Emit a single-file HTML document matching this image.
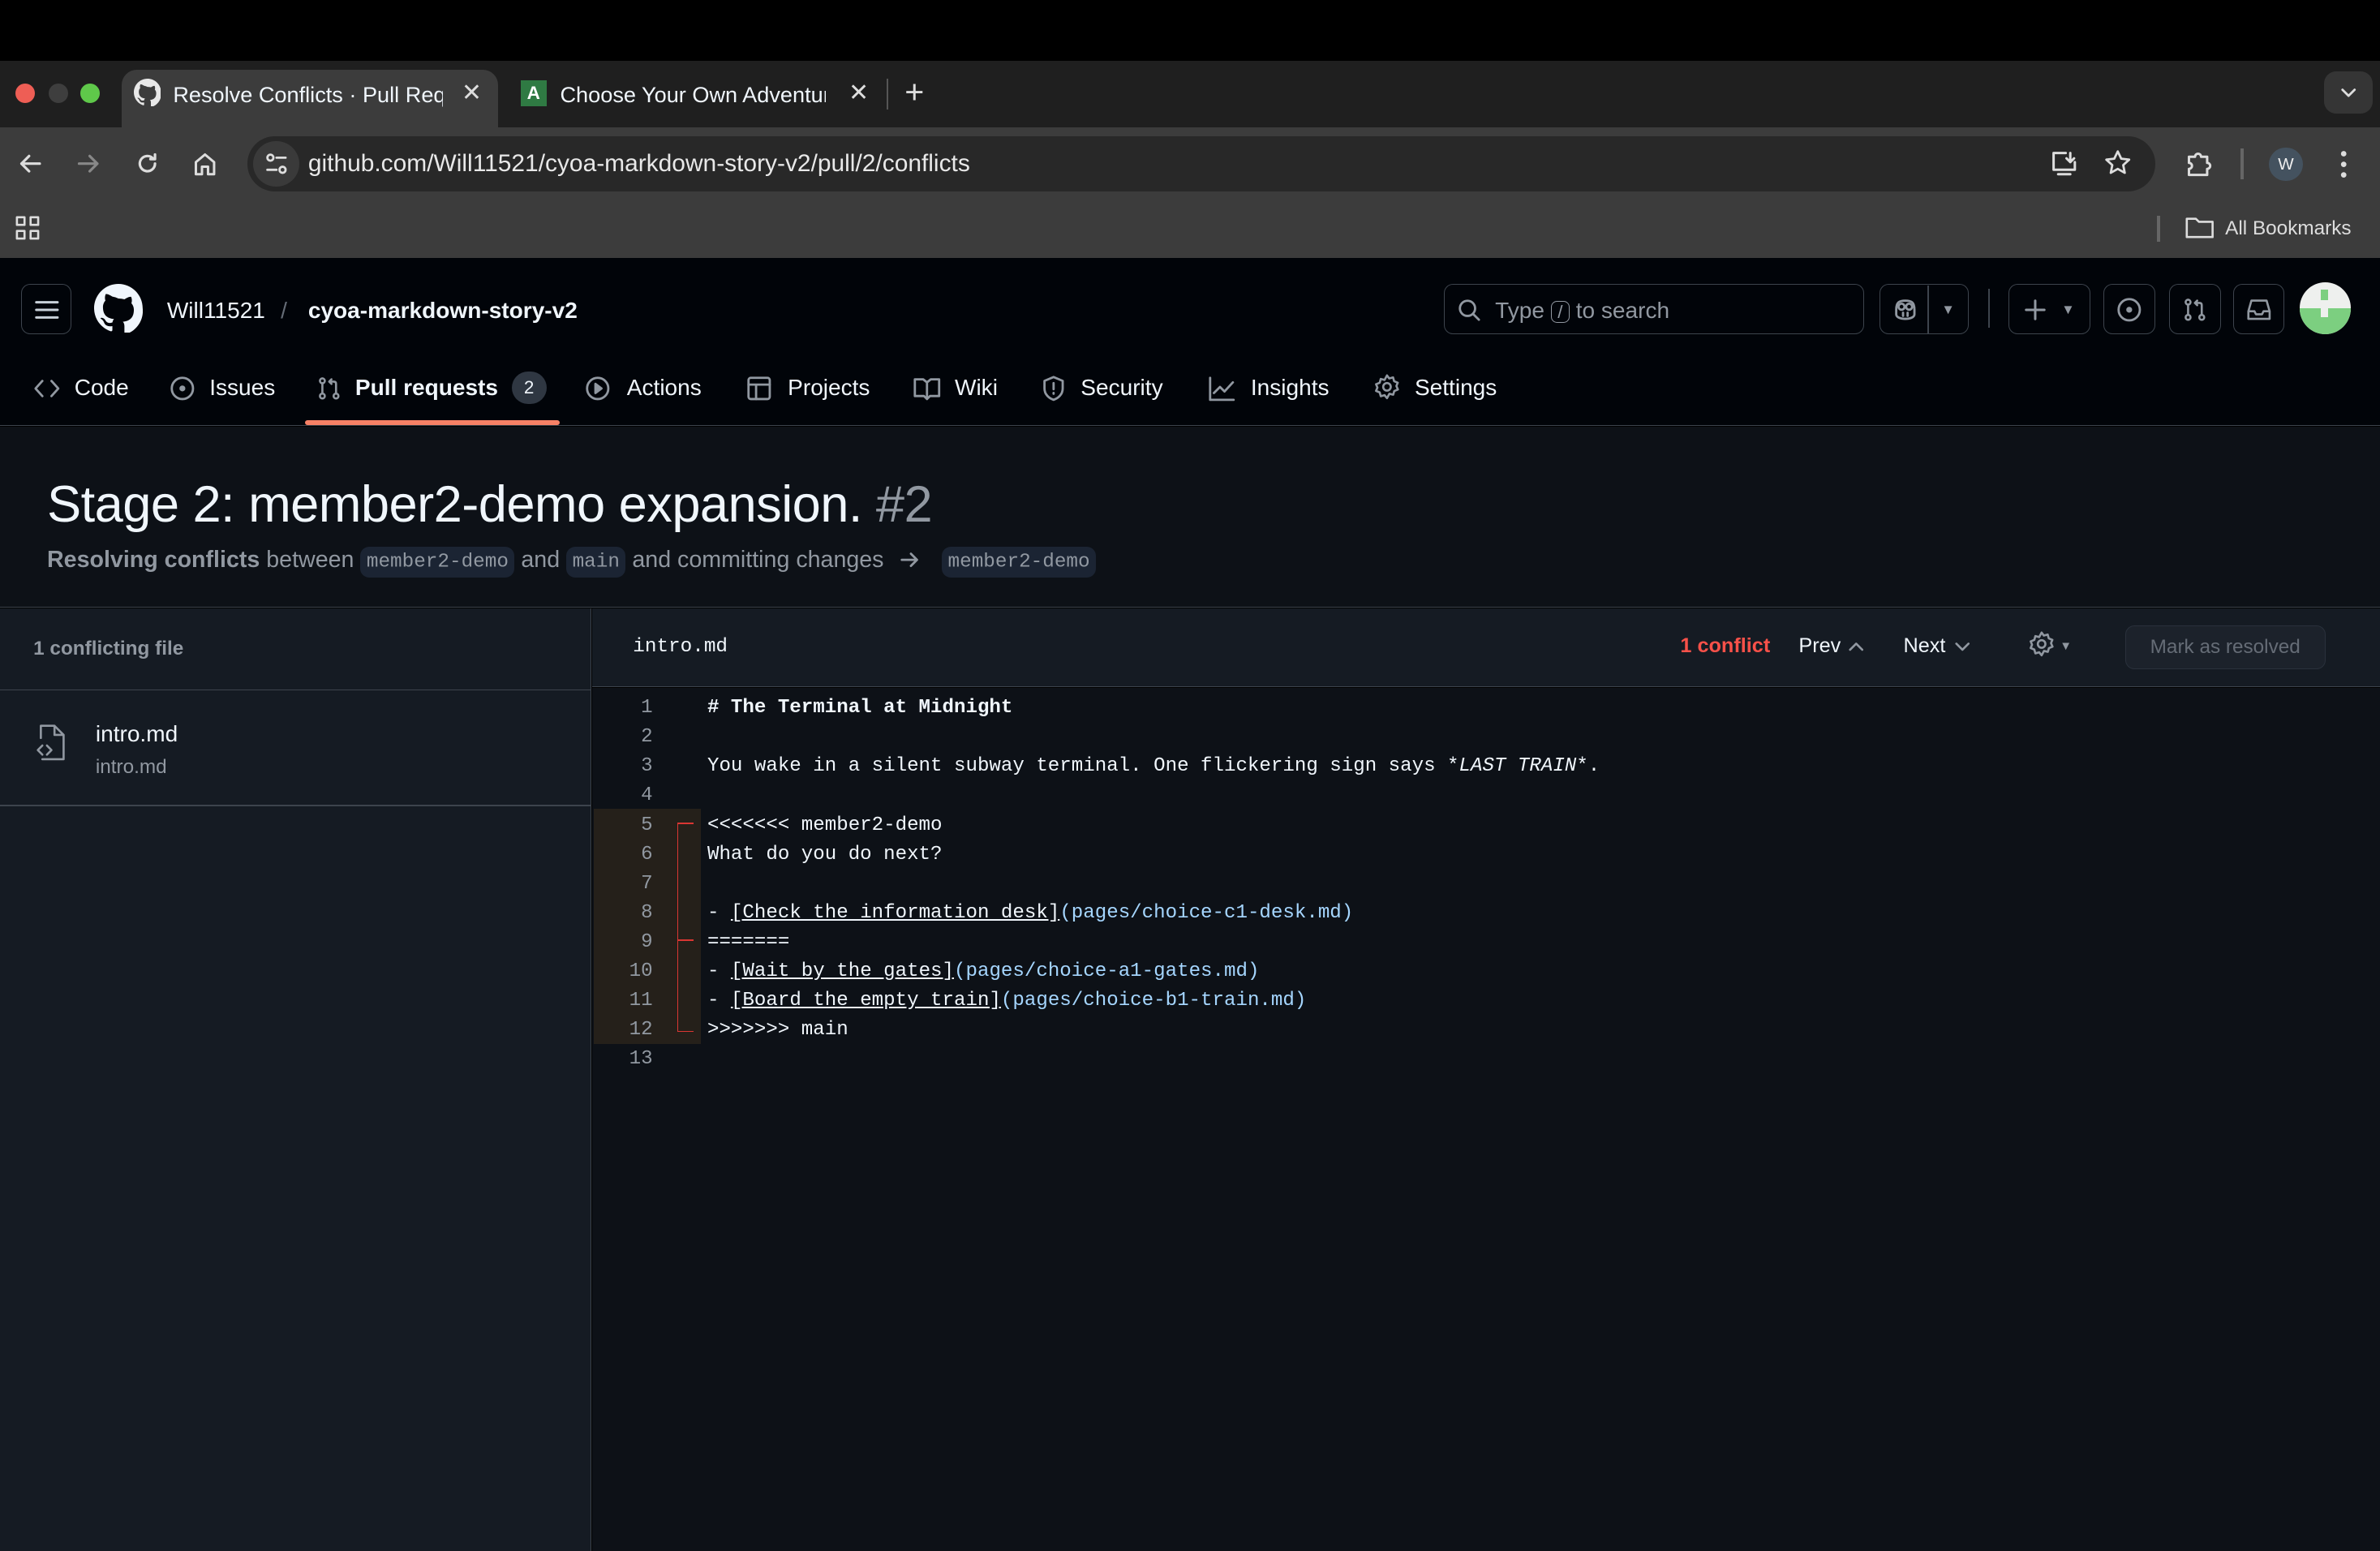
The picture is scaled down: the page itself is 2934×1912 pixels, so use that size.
<!DOCTYPE html>
<html><head><meta charset="utf-8"><style>
html,body{margin:0;padding:0;background:#000;overflow:hidden}
body{width:2934px;height:1912px}
#w{position:relative;width:1568px;height:1022px;zoom:1.8712;font-family:"Liberation Sans",sans-serif;color:#f0f6fc;overflow:hidden}
.a{position:absolute}
svg{position:absolute;fill:none;stroke-linecap:round;stroke-linejoin:round}
.mono{font-family:"Liberation Mono",monospace}
.btn{position:absolute;border:1px solid #3d444d;border-radius:6px;height:32px;top:187px}
.tab{font-size:14.5px;color:#f0f6fc}
.nav{position:absolute;top:247px;font-size:15px;color:#f0f6fc}
.code{position:absolute;left:466px;font-size:12.9px;color:#f0f6fc;white-space:pre;line-height:19.3px}
.ln{position:absolute;left:400px;width:30px;text-align:right;font-size:12.9px;color:#9198a1;line-height:19.3px}
.pill{background:#1b2433;border-radius:6px;padding:3px 4px;font-family:"Liberation Mono",monospace;font-size:13px;color:#9198a1}
.lk{color:#f0f6fc;text-decoration:underline}
.bl{color:#a5d6ff}
</style></head><body><div id="w">
<div class="a" style="left:0;top:0;width:1568px;height:40px;background:#000"></div>
<div class="a" style="left:0;top:40px;width:1568px;height:44px;background:#1f1f1f"></div>
<div class="a" style="left:10px;top:55px;width:13px;height:13px;border-radius:50%;background:#ee5e55"></div>
<div class="a" style="left:32px;top:55px;width:13px;height:13px;border-radius:50%;background:#3e3e3e"></div>
<div class="a" style="left:53px;top:55px;width:13px;height:13px;border-radius:50%;background:#5fc84a"></div>
<div class="a" style="left:80px;top:46px;width:248px;height:40px;background:#3c3c3c;border-radius:10px 10px 0 0"></div>
<svg style="left:88px;top:52px" width="18" height="18" viewBox="0 0 16 16"><path d="M8 0C3.58 0 0 3.58 0 8c0 3.54 2.29 6.53 5.47 7.59.4.07.55-.17.55-.38v-1.33c-2.230.48-2.7-1.07-2.7-1.07-.36-.93-.89-1.170-.89-1.17-.73-.5.06-.49.06-.49.8.06 1.230.83 1.23.83.72 1.23 1.88.87 2.34.67.07-.52.28-.87.51-1.07-1.78-.2-3.65-.89-3.65-3.95 0-.87.31-1.59.82-2.15-.08-.2-.36-1.02.08-2.12 0 0 .67-.21 2.2.82A7.6 7.6 0 0 1 8 4.8c.68 0 1.36.09 2 .27 1.53-1.04 2.2-.82 2.2-.82.44 1.1.16 1.92.08 2.12.51.56.82 1.27.82 2.15 0 3.07-1.87 3.75-3.65 3.95.29.25.54.73.54 1.48v2.2c0 .21.15.46.55.38A8.01 8.01 0 0 0 16 8c0-4.42-3.58-8-8-8z" fill="#e8e8e8" stroke="none"/></svg>
<div class="a tab" style="left:114px;top:54px;width:178px;overflow:hidden;white-space:nowrap">Resolve Conflicts · Pull Reque</div>
<div class="a" style="left:304px;top:52px;font-size:16px;color:#ddd">✕</div>
<div class="a" style="left:343px;top:53px;width:17px;height:17px;background:#2f7a43;color:#fff;font-size:12px;font-weight:bold;text-align:center;line-height:17px">A</div>
<div class="a tab" style="left:369px;top:54px;width:175px;overflow:hidden;white-space:nowrap">Choose Your Own Adventure</div>
<div class="a" style="left:559px;top:52px;font-size:16px;color:#ddd">✕</div>
<div class="a" style="left:584px;top:52px;width:1px;height:20px;background:#555"></div>
<div class="a" style="left:596px;top:48px;font-size:22px;color:#ddd">+</div>
<div class="a" style="left:1531px;top:47px;width:32px;height:28px;border-radius:8px;background:#353535"></div>
<svg style="left:1541px;top:56px" width="12" height="10" viewBox="0 0 12 10" stroke="#ddd" stroke-width="1.5"><path d="M2 3l4 4 4-4"/></svg>
<div class="a" style="left:0;top:84px;width:1568px;height:86px;background:#3c3c3c"></div>
<svg style="left:10px;top:98px" width="20" height="20" viewBox="0 0 20 20" stroke="#ddd" stroke-width="1.7"><path d="M16 10H4M9 5l-5 5 5 5"/></svg>
<svg style="left:48px;top:98px" width="20" height="20" viewBox="0 0 20 20" stroke="#888" stroke-width="1.7"><path d="M4 10h12M11 5l5 5-5 5"/></svg>
<svg style="left:87px;top:98px" width="20" height="20" viewBox="0 0 20 20" stroke="#ddd" stroke-width="1.7"><path d="M15 10a5 5 0 1 1-1.5-3.6M15 4v3h-3"/></svg>
<svg style="left:125px;top:98px" width="20" height="20" viewBox="0 0 20 20" stroke="#ddd" stroke-width="1.6"><path d="M4 9l6-5 6 5v8h-4v-5H8v5H4z"/></svg>
<div class="a" style="left:163px;top:90px;width:1257px;height:36px;border-radius:18px;background:#282828"></div>
<div class="a" style="left:167px;top:93px;width:30px;height:30px;border-radius:15px;background:#3a3a3a"></div>
<svg style="left:173px;top:99px" width="18" height="18" viewBox="0 0 18 18" stroke="#ddd" stroke-width="1.5"><circle cx="5" cy="5" r="2"/><path d="M9 5h6M3 13h6"/><circle cx="13" cy="13" r="2"/></svg>
<div class="a" style="left:203px;top:99px;font-size:16px;color:#e8e8e8">github.com/Will11521/cyoa-markdown-story-v2/pull/2/conflicts</div>
<svg style="left:1350px;top:98px" width="20" height="20" viewBox="0 0 20 20" stroke="#ddd" stroke-width="1.6"><path d="M11 3H3v11h14V9M6 17h8M14 3v6M11.5 6.5L14 9l2.5-2.5"/></svg>
<svg style="left:1385px;top:97px" width="20" height="20" viewBox="0 0 20 20" stroke="#ddd" stroke-width="1.5"><path d="M10 2.5l2.3 4.8 5.2.6-3.9 3.6 1 5.1-4.6-2.6-4.6 2.6 1-5.1L2.5 7.9l5.2-.6z"/></svg>
<svg style="left:1438px;top:97px" width="22" height="22" viewBox="0 0 22 22" stroke="#ddd" stroke-width="1.6"><path d="M4 6h4a2 2 0 1 1 4 0h4v4a2 2 0 1 1 0 4v4H4v-4a2 2 0 1 0 0-4z"/></svg>
<div class="a" style="left:1476px;top:98px;width:2px;height:20px;background:#666"></div>
<div class="a" style="left:1495px;top:97px;width:22px;height:22px;border-radius:50%;background:#44525f;color:#eee;font-size:11px;text-align:center;line-height:22px">W</div>
<svg style="left:1538px;top:97px" width="12" height="22" viewBox="0 0 12 22" fill="#ddd" stroke="none"><circle cx="6" cy="4" r="1.8" fill="#ddd"/><circle cx="6" cy="11" r="1.8" fill="#ddd"/><circle cx="6" cy="18" r="1.8" fill="#ddd"/></svg>
<svg style="left:10px;top:142px" width="16" height="16" viewBox="0 0 16 16" stroke="#ddd" stroke-width="1.4"><rect x="1" y="1" width="5" height="5"/><rect x="10" y="1" width="5" height="5"/><rect x="1" y="10" width="5" height="5"/><rect x="10" y="10" width="5" height="5"/></svg>
<div class="a" style="left:1421px;top:142px;width:2px;height:17px;background:#666"></div>
<svg style="left:1439px;top:142px" width="20" height="16" viewBox="0 0 20 16" stroke="#ddd" stroke-width="1.4"><path d="M1.5 2h6l2 2h9v10h-17z"/></svg>
<div class="a" style="left:1466px;top:143px;font-size:13px;color:#ddd">All Bookmarks</div>
<div class="a" style="left:0;top:170px;width:1568px;height:110px;background:#010409;border-bottom:1px solid #3d444d"></div>
<div class="btn" style="left:14px;width:32px"></div>
<svg style="left:22px;top:196px" width="18" height="16" viewBox="0 0 18 16" stroke="#c9d1d9" stroke-width="1.6"><path d="M2 3h14M2 8h14M2 13h14"/></svg>
<svg style="left:62px;top:187px" width="32" height="32" viewBox="0 0 16 16"><path d="M8 0C3.58 0 0 3.58 0 8c0 3.54 2.29 6.53 5.47 7.59.4.07.55-.17.55-.38v-1.33c-2.23.48-2.7-1.07-2.7-1.07-.36-.93-.89-1.17-.89-1.17-.73-.5.06-.49.06-.49.8.06 1.23.83 1.23.83.72 1.23 1.88.87 2.34.67.07-.52.28-.87.51-1.07-1.78-.2-3.65-.89-3.65-3.95 0-.87.31-1.59.82-2.15-.08-.2-.36-1.02.08-2.12 0 0 .67-.21 2.2.82A7.6 7.6 0 0 1 8 4.8c.68 0 1.36.09 2 .27 1.53-1.04 2.2-.82 2.2-.82.44 1.1.16 1.92.08 2.12.51.56.82 1.27.82 2.15 0 3.07-1.87 3.75-3.65 3.95.29.25.54.73.54 1.48v2.2c0 .21.15.46.55.38A8.01 8.01 0 0 0 16 8c0-4.42-3.58-8-8-8z" fill="#f0f6fc" stroke="none"/></svg>
<div class="a" style="left:110px;top:196px;font-size:15px;color:#f0f6fc">Will11521</div>
<div class="a" style="left:185px;top:196px;font-size:15px;color:#656c76">/</div>
<div class="a" style="left:203px;top:196px;font-size:15px;font-weight:bold;color:#f0f6fc">cyoa-markdown-story-v2</div>
<div class="btn" style="left:951px;width:276px"></div>
<svg style="left:960px;top:196px" width="16" height="16" viewBox="0 0 16 16" stroke="#9198a1" stroke-width="1.5"><circle cx="7" cy="7" r="5"/><path d="M11 11l3.5 3.5"/></svg>
<div class="a" style="left:985px;top:196px;font-size:15px;color:#9198a1">Type <span style="border:1px solid #9198a1;border-radius:4px;padding:0 4px;font-size:12px">/</span> to search</div>
<div class="btn" style="left:1238px;width:58px"></div>
<div class="a" style="left:1270px;top:188px;width:1px;height:32px;background:#3d444d"></div>
<svg style="left:1246px;top:195px" width="18" height="18" viewBox="0 0 18 18" stroke="#9198a1" stroke-width="1.5"><path d="M3 9c0-5 2-6 6-6s6 1 6 6v3c0 2-3 3-6 3s-6-1-6-3z"/><circle cx="6.5" cy="7" r="2"/><circle cx="11.5" cy="7" r="2"/><path d="M7.5 11v2M10.5 11v2"/></svg>
<div class="a" style="left:1279px;top:199px;font-size:9px;color:#9198a1">▼</div>
<div class="a" style="left:1310px;top:190px;width:1px;height:26px;background:#3d444d"></div>
<div class="btn" style="left:1323px;width:53px"></div>
<svg style="left:1333px;top:196px" width="16" height="16" viewBox="0 0 16 16" stroke="#9198a1" stroke-width="1.6"><path d="M8 2v12M2 8h12"/></svg>
<div class="a" style="left:1358px;top:199px;font-size:9px;color:#9198a1">▼</div>
<div class="btn" style="left:1386px;width:33px"></div>
<svg style="left:1394px;top:195px" width="18" height="18" viewBox="0 0 18 18" stroke="#9198a1" stroke-width="1.5"><circle cx="9" cy="9" r="7"/><circle cx="9" cy="9" r="1.2" fill="#9198a1"/></svg>
<div class="btn" style="left:1429px;width:33px"></div>
<svg style="left:1437px;top:195px" width="18" height="18" viewBox="0 0 18 18" stroke="#9198a1" stroke-width="1.4"><circle cx="4.5" cy="4" r="1.6"/><circle cx="4.5" cy="14" r="1.6"/><circle cx="13.5" cy="14" r="1.6"/><path d="M4.5 5.6v6.8M13.5 12.4V6c0-1-.5-1.5-1.5-1.5H9M10.5 3L9 4.5 10.5 6"/></svg>
<div class="btn" style="left:1471px;width:33px"></div>
<svg style="left:1479px;top:195px" width="18" height="18" viewBox="0 0 18 18" stroke="#9198a1" stroke-width="1.4"><path d="M2 10l2-7h10l2 7v5H2zM2 10h4l1 2h4l1-2h4"/></svg>
<div class="a" style="left:1515px;top:186px;width:34px;height:34px;border-radius:50%;background:#eef0ee;overflow:hidden">
<div class="a" style="left:0;top:17px;width:34px;height:17px;background:#7ccf80"></div>
<div class="a" style="left:14px;top:5px;width:5px;height:7px;background:#7ccf80"></div>
<div class="a" style="left:14px;top:17px;width:5px;height:6px;background:#eef0ee"></div>
</div>
<svg style="left:22px;top:248px" width="18" height="16" viewBox="0 0 18 16" stroke="#9198a1" stroke-width="1.5"><path d="M6 3L1.5 8 6 13M12 3l4.5 5L12 13"/></svg>
<div class="nav" style="left:49px">Code</div>
<svg style="left:111px;top:247px" width="18" height="18" viewBox="0 0 18 18" stroke="#9198a1" stroke-width="1.5"><circle cx="9" cy="9" r="7"/><circle cx="9" cy="9" r="1.2" fill="#9198a1"/></svg>
<div class="nav" style="left:138px">Issues</div>
<svg style="left:208px;top:247px" width="18" height="18" viewBox="0 0 18 18" stroke="#9198a1" stroke-width="1.4"><circle cx="4.5" cy="4" r="1.6"/><circle cx="4.5" cy="14" r="1.6"/><circle cx="13.5" cy="14" r="1.6"/><path d="M4.5 5.6v6.8M13.5 12.4V6c0-1-.5-1.5-1.5-1.5H9M10.5 3L9 4.5 10.5 6"/></svg>
<div class="nav" style="left:234px;font-weight:bold">Pull requests</div>
<div class="a" style="left:337px;top:245px;width:23px;height:21px;border-radius:11px;background:#2f3742;font-size:12px;text-align:center;line-height:21px">2</div>
<div class="a" style="left:201px;top:277px;width:168px;height:3px;border-radius:2px;background:#f78166"></div>
<svg style="left:385px;top:247px" width="18" height="18" viewBox="0 0 18 18" stroke="#9198a1" stroke-width="1.5"><circle cx="9" cy="9" r="7"/><path d="M7.5 6v6l4-3z" fill="#9198a1"/></svg>
<div class="nav" style="left:413px">Actions</div>
<svg style="left:491px;top:247px" width="18" height="18" viewBox="0 0 18 18" stroke="#9198a1" stroke-width="1.5"><rect x="2" y="2" width="14" height="14" rx="1.5"/><path d="M2 6.5h14M7 6.5V16"/></svg>
<div class="nav" style="left:519px">Projects</div>
<svg style="left:601px;top:247px" width="19" height="18" viewBox="0 0 19 18" stroke="#9198a1" stroke-width="1.5"><path d="M1.5 3h5.5l2.5 2 2.5-2h5.5v11h-6l-2 2-2-2h-6zM9.5 5v11"/></svg>
<div class="nav" style="left:629px">Wiki</div>
<svg style="left:685px;top:247px" width="18" height="18" viewBox="0 0 18 18" stroke="#9198a1" stroke-width="1.5"><path d="M9 1.5l6 2.5v5c0 4-3 6.5-6 7.5-3-1-6-3.5-6-7.5V4z"/><path d="M9 5.5v4M9 12v.5"/></svg>
<div class="nav" style="left:712px">Security</div>
<svg style="left:796px;top:247px" width="18" height="18" viewBox="0 0 18 18" stroke="#9198a1" stroke-width="1.5"><path d="M1.5 2v14.5H17M4 12l4-4 3 3 5.5-6"/></svg>
<div class="nav" style="left:824px">Insights</div>
<svg style="left:905px;top:246px" width="18" height="18" viewBox="0 0 18 18" stroke="#9198a1" stroke-width="1.4"><circle cx="9" cy="9" r="2.5"/><path d="M9 1.5l1.5 2 2.5-.7.7 2.5 2.4 1-.9 2.2 1 2.3-2.4 1-.7 2.4-2.5-.6L9 16.5l-1.6-2-2.5.7-.7-2.5-2.4-1 .9-2.2-.9-2.2 2.4-1 .7-2.5 2.5.7z"/></svg>
<div class="nav" style="left:932px">Settings</div>
<div class="a" style="left:0;top:281px;width:1568px;height:119px;background:#0d1117;border-bottom:1px solid #3d444d"></div>
<div class="a" style="left:31px;top:313px;font-size:33.8px;color:#f0f6fc;letter-spacing:-0.3px;white-space:nowrap">Stage 2: member2-demo expansion. <span style="color:#9198a1">#2</span></div>
<div class="a" style="left:31px;top:360px;font-size:15.3px;color:#9198a1;white-space:nowrap"><b>Resolving conflicts</b> between <span class="pill">member2-demo</span> and <span class="pill">main</span> and committing changes <span style="display:inline-block;width:34px"></span><span class="pill">member2-demo</span></div>
<svg style="left:592px;top:362px" width="14" height="14" viewBox="0 0 14 14" stroke="#9198a1" stroke-width="1.5"><path d="M2 7h10M8 3l4 4-4 4"/></svg>
<div class="a" style="left:0;top:401px;width:389px;height:621px;background:#151b23;border-right:1px solid #3d444d"></div>
<div class="a" style="left:22px;top:420px;font-size:13px;font-weight:bold;color:#9198a1">1 conflicting file</div>
<div class="a" style="left:0;top:454px;width:389px;height:1px;background:#3d444d"></div>
<svg style="left:22px;top:476px" width="22" height="26" viewBox="0 0 22 26" stroke="#9198a1" stroke-width="1.4"><path d="M5 10V2h9l6 6v16H6M14 2v6h6M6 15l-3 3 3 3M9 15l3 3-3 3"/></svg>
<div class="a" style="left:63px;top:475px;font-size:15px;color:#f0f6fc">intro.md</div>
<div class="a" style="left:63px;top:498px;font-size:13px;color:#9198a1">intro.md</div>
<div class="a" style="left:0;top:530px;width:389px;height:1px;background:#3d444d"></div>
<div class="a" style="left:390px;top:401px;width:1178px;height:51px;background:#151b23;border-bottom:1px solid #3d444d"></div>
<div class="a mono" style="left:417px;top:419px;font-size:13px;color:#f0f6fc">intro.md</div>
<div class="a" style="left:1107px;top:418px;font-size:13.5px;font-weight:bold;color:#f85149">1 conflict</div>
<div class="a" style="left:1185px;top:418px;font-size:13.5px;color:#f0f6fc">Prev</div>
<svg style="left:1217px;top:420px" width="12" height="12" viewBox="0 0 12 12" stroke="#9198a1" stroke-width="1.4"><path d="M2 8l4-4 4 4"/></svg>
<div class="a" style="left:1254px;top:418px;font-size:13.5px;color:#f0f6fc">Next</div>
<svg style="left:1287px;top:420px" width="12" height="12" viewBox="0 0 12 12" stroke="#9198a1" stroke-width="1.4"><path d="M2 4l4 4 4-4"/></svg>
<svg style="left:1336px;top:415px" width="18" height="18" viewBox="0 0 18 18" stroke="#9198a1" stroke-width="1.4"><circle cx="9" cy="9" r="2.5"/><path d="M9 1.5l1.5 2 2.5-.7.7 2.5 2.4 1-.9 2.2 1 2.3-2.4 1-.7 2.4-2.5-.6L9 16.5l-1.6-2-2.5.7-.7-2.5-2.4-1 .9-2.2-.9-2.2 2.4-1 .7-2.5 2.5.7z"/></svg>
<div class="a" style="left:1357px;top:421px;font-size:8px;color:#9198a1">▼</div>
<div class="a" style="left:1400px;top:412px;width:131px;height:28px;border:1px solid #2a313c;border-radius:6px;background:#1c222b;color:#656c76;font-size:13px;text-align:center;line-height:28px">Mark as resolved</div>
<div class="a" style="left:390px;top:453px;width:1178px;height:569px;background:#0d1117"></div>
<div class="a" style="left:391px;top:533px;width:71px;height:155px;background:#25201a"></div>
<div class="a" style="left:446px;top:542px;width:1px;height:138px;background:#da3633"></div>
<div class="a" style="left:446px;top:542px;width:11px;height:1px;background:#da3633"></div>
<div class="a" style="left:446px;top:619px;width:11px;height:1px;background:#da3633"></div>
<div class="a" style="left:446px;top:679px;width:11px;height:1px;background:#da3633"></div>
<div class="ln mono" style="top:457px">1<br>2<br>3<br>4<br>5<br>6<br>7<br>8<br>9<br>10<br>11<br>12<br>13</div>
<div class="code mono" style="top:457px"><b># The Terminal at Midnight</b>

You wake in a silent subway terminal. One flickering sign says *<i>LAST TRAIN</i>*.

&lt;&lt;&lt;&lt;&lt;&lt;&lt; member2-demo
What do you do next?

- <span class="lk">[Check the information desk]</span><span class="bl">(pages/choice-c1-desk.md)</span>
=======
- <span class="lk">[Wait by the gates]</span><span class="bl">(pages/choice-a1-gates.md)</span>
- <span class="lk">[Board the empty train]</span><span class="bl">(pages/choice-b1-train.md)</span>
&gt;&gt;&gt;&gt;&gt;&gt;&gt; main
</div>
</div></body></html>
